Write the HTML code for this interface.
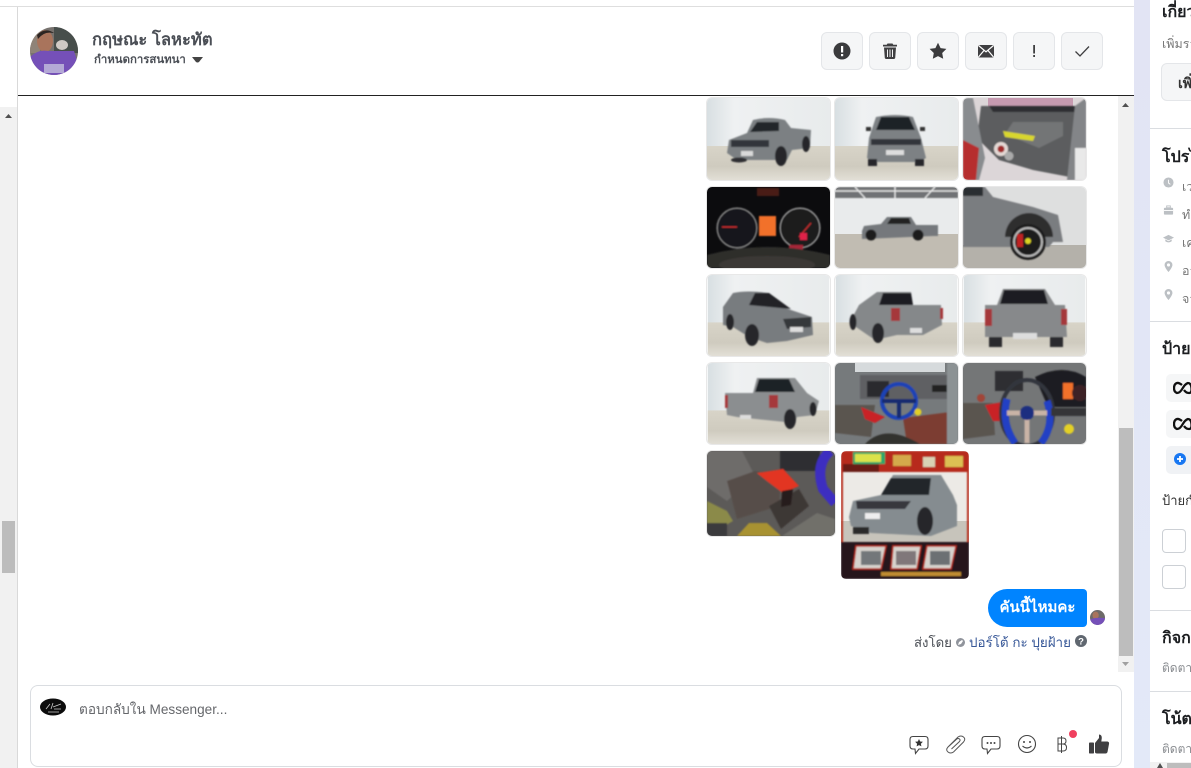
<!DOCTYPE html>
<html lang="th"><head><meta charset="utf-8"><title>Messenger</title>
<style>
html,body{margin:0;padding:0;width:1191px;height:768px;overflow:hidden;background:#fff;font-family:"Liberation Sans","Noto Sans CJK SC",sans-serif;color:#444950}
.a{position:absolute}
.btn{position:absolute;top:32px;width:40px;height:36px;background:#f5f6f7;border:1px solid #e4e6e9;border-radius:6px}
.btn svg{position:absolute;left:8px;top:6px;width:24px;height:24px}
.t{position:absolute;width:123px;height:82px;border-radius:5px;overflow:hidden;box-shadow:0 0 0 1px #e8e8e8}
.t svg{display:block;width:100%;height:100%}
.h{position:absolute;left:1162px;font-size:16px;font-weight:bold;color:#1c1e21;white-space:nowrap}
.s{position:absolute;left:1162px;font-size:12.500px;color:#8a8d91;white-space:nowrap}
.sep{position:absolute;left:1150px;width:41px;height:1px;background:#dadde1}
.r{position:absolute;left:1182px;font-size:12.500px;color:#777;white-space:nowrap}
.ic{position:absolute;left:1163px;width:11px;height:11px}
.tag{position:absolute;left:1166px;width:25px;height:28px;background:#f5f6f7;border-radius:5px 0 0 5px;overflow:hidden}
.tag svg{position:absolute;left:7px;top:7px}
.cb{position:absolute;left:1162px;width:22px;height:22px;border:1px solid #ccd0d5;border-radius:4px;background:#fff}
</style></head><body>
<svg width="0" height="0" style="position:absolute"><defs>
<filter id="b" x="-10%" y="-10%" width="120%" height="120%"><feGaussianBlur stdDeviation=".8"/></filter>
<linearGradient id="fl" x1="0" y1="0" x2="0" y2="1"><stop offset="0" stop-color="#d8d4c8"/><stop offset=".6" stop-color="#cfcbbf"/><stop offset="1" stop-color="#e2dfd6"/></linearGradient>
<linearGradient id="wl" x1="0" y1="0" x2="1" y2="0"><stop offset="0" stop-color="#d8dfe2"/><stop offset=".22" stop-color="#eff1f2"/><stop offset="1" stop-color="#e8ebec"/></linearGradient>
<symbol id="room" viewBox="0 0 123 82"><rect width="123" height="82" fill="url(#wl)"/><rect y="48" width="123" height="34" fill="url(#fl)"/></symbol>
<clipPath id="av"><circle cx="24" cy="24" r="24"/></clipPath>
</defs></svg>

<!-- frame -->
<div class="a" style="left:0;top:6px;width:1134px;height:1px;background:#dedede"></div>
<div class="a" style="left:17px;top:7px;width:1px;height:761px;background:#d9d9d9"></div>
<div class="a" style="left:0;top:107px;width:17px;height:661px;background:#f1f1f1"></div>
<svg class="a" style="left:4px;top:113px" width="9" height="6"><path d="M1 5L4.500 1 8 5z" fill="#505050"/></svg>
<div class="a" style="left:2px;top:521px;width:13px;height:52px;background:#bcbcbc"></div>
<div class="a" style="left:18px;top:95px;width:1116px;height:1px;background:#222"></div>

<!-- right column bg -->
<div class="a" style="left:1134px;top:0;width:16px;height:768px;background:linear-gradient(#e2e4f4,#e3e9f8)"></div>
<div class="a" style="left:1118px;top:96px;width:16px;height:576px;background:#f1f1f1"></div>
<svg class="a" style="left:1121px;top:102px" width="9" height="6"><path d="M1 5L4.500 1 8 5z" fill="#505050"/></svg>
<div class="a" style="left:1119px;top:428px;width:14px;height:228px;background:#bdbdbd"></div>
<svg class="a" style="left:1121px;top:661px" width="9" height="6"><path d="M1 1L4.500 5 8 1z" fill="#a0a0a0"/></svg>

<!-- header -->
<svg class="a" style="left:30px;top:27px" width="48" height="48" viewBox="0 0 48 48"><g clip-path="url(#av)"><rect width="48" height="48" fill="#77726e"/><rect x="24" width="24" height="26" fill="#474e4b"/><rect x="0" width="10" height="26" fill="#8f8378"/><ellipse cx="15" cy="14" rx="8" ry="11" fill="#a9745c"/><path d="M7 8Q15 0 24 6L23 6Q14 4 8 12z" fill="#2c2522"/><ellipse cx="32" cy="18" rx="6" ry="5" fill="#cfc9c4"/><path d="M0 48V30Q8 22 18 24L36 24 44 24Q48 34 48 48z" fill="#7550b8"/><rect x="14" y="37" width="20" height="9" fill="#b4a9d6"/></g></svg>
<div class="a" style="left:92px;top:27px;font-size:16.600px;font-weight:bold;color:#4b4f56;white-space:nowrap">กฤษณะ โลหะทัต</div>
<div class="a" style="left:94px;top:51px;font-size:11.400px;font-weight:bold;color:#4b4f56;white-space:nowrap">กำหนดการสนทนา</div>
<svg class="a" style="left:192px;top:57px" width="11" height="6"><path d="M0 0H11L7 5Q5.500 6 4 5z" fill="#444"/></svg>

<div class="btn" style="left:821px"><svg viewBox="0 0 24 24"><circle cx="12" cy="12" r="8.500" fill="#3b3b3d"/><rect x="11" y="7" width="2.200" height="6.500" fill="#fff"/><rect x="11" y="15" width="2.200" height="2.200" fill="#fff"/></svg></div>
<div class="btn" style="left:869px"><svg viewBox="0 0 24 24" fill="#3f3f41"><path d="M9.500 4.500h5l.8 1.300H19v1.700H5V5.800h3.700z"/><path fill-rule="evenodd" d="M6 8.500h12l-.8 10.500a1.500 1.500 0 0 1-1.500 1H8.300a1.500 1.500 0 0 1-1.500-1zM9 10.500v7.500h1v-7.500zM11.500 10.500v7.500h1v-7.500zM14 10.500v7.500h1v-7.500z"/></svg></div>
<div class="btn" style="left:917px"><svg viewBox="0 0 24 24"><path d="M12 3.800l2.600 5.300 5.800.8-4.200 4.100 1 5.800-5.200-2.700-5.200 2.700 1-5.800L3.600 9.900l5.800-.8z" fill="#3b3b3d"/></svg></div>
<div class="btn" style="left:965px"><svg viewBox="0 0 24 24"><rect x="4" y="6" width="16" height="12.500" rx="1.500" fill="#3f3f41"/><path d="M4.500 6.500L12 12.800l7.500-6.300M4.500 18L10 11.500M19.500 18L14 11.500" stroke="#fff" stroke-width="1.200" fill="none"/></svg></div>
<div class="btn" style="left:1013px"><svg viewBox="0 0 24 24"><rect x="11.200" y="6" width="1.800" height="8.500" fill="#3f3f41"/><rect x="11.200" y="16" width="1.800" height="2" fill="#3f3f41"/></svg></div>
<div class="btn" style="left:1061px"><svg viewBox="0 0 24 24"><path d="M5.500 12.500l4.500 4.500 9-9.500" stroke="#3f3f41" stroke-width="1.300" fill="none"/></svg></div>

<!-- image tiles -->
<div class="t" style="left:707px;top:98px"><svg viewBox="0 0 123 82"><use href="#room"/><g filter="url(#b)"><path d="M20 55L22 42 40 35 46 22Q62 18 78 22L84 30 104 32 103 50 85 52 80 62 62 62 30 62z" fill="#7c8083"/><path d="M43 34L50 24H72L72 33z" fill="#24272b"/><rect x="24" y="42" width="38" height="7" fill="#33363a"/><rect x="34" y="53" width="12" height="5" fill="#d9d9d9"/><ellipse cx="74" cy="58" rx="6" ry="10" fill="#26282a"/><ellipse cx="99" cy="46" rx="4" ry="8" fill="#26282a"/><ellipse cx="32" cy="62" rx="8" ry="2.500" fill="#2d2e30"/></g></svg></div>
<div class="t" style="left:835px;top:98px"><svg viewBox="0 0 123 82"><use href="#room"/><g filter="url(#b)"><path d="M34 40L41 19Q60 15 78 19L86 40 91 60 84 64H38L32 60z" fill="#7d8184"/><path d="M41 32L46 19H74L80 32z" fill="#1f2226"/><rect x="36" y="41" width="50" height="6" fill="#32353a"/><rect x="51" y="52" width="18" height="5" fill="#ddd"/><rect x="33" y="61" width="9" height="7" fill="#26282a"/><rect x="80" y="61" width="9" height="7" fill="#26282a"/><rect x="31" y="29" width="5" height="4" fill="#333"/><rect x="85" y="29" width="5" height="4" fill="#333"/></g></svg></div>
<div class="t" style="left:963px;top:98px"><svg viewBox="0 0 123 82"><rect width="123" height="82" fill="#dcd6d8"/><rect x="25" width="85" height="14" fill="#c69ab0"/><g filter="url(#b)"><path d="M18 8H120L112 80 70 72 36 62 14 40z" fill="#5c5d5f"/><path d="M26 8H116V14H30z" fill="#2d2e30"/><path d="M50 24H100V38L76 50 42 36z" fill="#737476"/><path d="M40 33L72 38 70 43 42 39z" fill="#d8d62e"/><path d="M0 0H10L22 60 16 82H0z" fill="#898c8f"/><path d="M0 42L16 50 13 82H0z" fill="#b62d2d"/><circle cx="38" cy="51" r="7" fill="#e3d8d4"/><circle cx="38" cy="51" r="3.500" fill="#a02c2c"/><circle cx="46" cy="58" r="4.500" fill="#aaa"/><path d="M112 8L123 0V82H104z" fill="#838588"/><rect x="112" y="50" width="11" height="32" fill="#e9e9e9"/></g></svg></div>

<div class="t" style="left:707px;top:187px;height:81px"><svg viewBox="0 0 123 81"><rect width="123" height="81" fill="#0c0c0e"/><g filter="url(#b)"><rect x="50" y="1" width="22" height="8" fill="#4a1a14"/><circle cx="30" cy="41" r="20" fill="#15171a" stroke="#999" stroke-width="1"/><circle cx="93" cy="41" r="20" fill="#1c1b1e" stroke="#aaa" stroke-width="1"/><rect x="52" y="29" width="17" height="20" fill="#f2712c"/><path d="M15 40H30" stroke="#d33" stroke-width="1"/><path d="M92 50L104 36" stroke="#d33" stroke-width="1"/><rect x="93" y="46" width="7" height="7" fill="#e02049"/><rect x="82" y="58" width="14" height="6" fill="#a62638"/><path d="M0 68Q60 52 123 68V81H0z" fill="#2e2e2c"/><ellipse cx="60" cy="78" rx="48" ry="9" fill="#3b3835"/></g></svg></div>
<div class="t" style="left:835px;top:187px;height:81px"><svg viewBox="0 0 123 81"><rect width="123" height="81" fill="#e9ebec"/><rect y="47" width="123" height="34" fill="#c1bcb2"/><g filter="url(#b)"><rect width="123" height="11" fill="#6f7275"/><path d="M0 4H123M20 0L30 11M60 0V11M100 0L90 11" stroke="#eee" stroke-width="1.200"/><path d="M27 44L29 39 46 37 52 30H76L81 38H103V49H98L27 52z" fill="#74787b"/><path d="M52 37L56 31H74L76 37z" fill="#222"/><circle cx="36" cy="48" r="5.500" fill="#1c1c1c"/><circle cx="83" cy="48" r="5.500" fill="#1c1c1c"/></g></svg></div>
<div class="t" style="left:963px;top:187px;height:81px"><svg viewBox="0 0 123 81"><rect width="123" height="81" fill="#dedfdf"/><rect y="58" width="123" height="23" fill="#b4b1aa"/><g filter="url(#b)"><path d="M0 0H22L30 10 70 20 95 28 100 55H90L86 60H0z" fill="#7a7d80"/><rect y="0" width="20" height="9" fill="#2c2e30"/><path d="M42 50A24 24 0 0 1 90 50z" fill="#2d2d2f"/><circle cx="65" cy="55" r="18" fill="#1a1a1a"/><circle cx="65" cy="55" r="14" fill="none" stroke="#bbb" stroke-width="2"/><rect x="54" y="47" width="6" height="13" fill="#bf2020"/><circle cx="65" cy="54" r="3" fill="#dbd323"/></g></svg></div>

<div class="t" style="left:707px;top:275px;height:81px"><svg viewBox="0 0 123 81"><use href="#room"/><g filter="url(#b)"><path d="M16 32L26 18Q40 15 62 18L78 33 105 42 106 60 80 66 60 68 42 62 26 52 16 50z" fill="#787c7f"/><path d="M42 30L48 18H62L84 34z" fill="#212428"/><path d="M76 44L104 42V52L80 54z" fill="#34373a"/><rect x="83" y="52" width="13" height="5" fill="#ddd"/><ellipse cx="45" cy="60" rx="7" ry="11" fill="#26282a"/><ellipse cx="23" cy="47" rx="4" ry="8" fill="#26282a"/></g></svg></div>
<div class="t" style="left:835px;top:275px;height:81px"><svg viewBox="0 0 123 81"><use href="#room"/><g filter="url(#b)"><path d="M16 45L24 30 42 17H76L78 30H106L107 50 88 60 62 60 40 65 18 50z" fill="#85888a"/><path d="M44 30L48 18H76L78 30z" fill="#1c1e22"/><rect x="56" y="33" width="9" height="13" fill="#a5383a"/><rect x="105" y="33" width="3" height="11" fill="#a5383a"/><rect x="75" y="53" width="12" height="5" fill="#ddd"/><ellipse cx="43" cy="58" rx="6" ry="10" fill="#26282a"/><ellipse cx="18" cy="47" rx="3.500" ry="8" fill="#26282a"/></g></svg></div>
<div class="t" style="left:963px;top:275px;height:81px"><svg viewBox="0 0 123 81"><use href="#room"/><g filter="url(#b)"><path d="M22 30H34L40 14H82L92 30H102L104 62H22z" fill="#87898b"/><path d="M37 29L41 15H81L85 29z" fill="#1c1e22"/><rect x="22" y="34" width="7" height="17" fill="#a5383a"/><rect x="98" y="34" width="6" height="16" fill="#a5383a"/><rect x="50" y="58" width="24" height="6" fill="#ddd"/><rect x="26" y="62" width="13" height="10" fill="#2a2b2d"/><rect x="87" y="62" width="13" height="10" fill="#2a2b2d"/></g></svg></div>

<div class="t" style="left:707px;top:363px;height:81px"><svg viewBox="0 0 123 81"><use href="#room"/><g filter="url(#b)"><path d="M18 30H46L50 15H88L100 30 112 38 108 52 90 54 88 60 30 54 20 52z" fill="#8b8e90"/><path d="M48 29L52 16H82L88 29z" fill="#1f2125"/><rect x="62" y="32" width="9" height="13" fill="#a5383a"/><rect x="18" y="32" width="3" height="13" fill="#a5383a"/><rect x="33" y="52" width="11" height="4" fill="#ddd"/><ellipse cx="83" cy="56" rx="6" ry="10" fill="#26282a"/><ellipse cx="106" cy="46" rx="3.500" ry="7" fill="#26282a"/></g></svg></div>
<div class="t" style="left:835px;top:363px;height:81px"><svg viewBox="0 0 123 81"><rect width="123" height="81" fill="#767a7c"/><rect x="20" width="90" height="9" fill="#d6dadc"/><g filter="url(#b)"><rect x="25" y="12" width="90" height="24" fill="#5f6163"/><rect x="32" y="18" width="22" height="16" fill="#2a2b2d"/><path d="M0 42L40 42 36 74 0 70z" fill="#5a5450"/><path d="M26 44L50 54 40 60 30 56z" fill="#c92226"/><path d="M68 55L123 48V81H72z" fill="#7c3c32"/><path d="M30 81Q50 60 85 81z" fill="#33302e"/><circle cx="64" cy="38" r="17" fill="none" stroke="#1f43b5" stroke-width="4"/><path d="M47 38H81M64 38V55" stroke="#182b70" stroke-width="4"/><circle cx="83" cy="49" r="3.500" fill="#e1cf26"/><rect x="97" y="22" width="15" height="7" fill="#222"/><rect x="112" y="0" width="11" height="81" fill="#8c9294"/></g></svg></div>
<div class="t" style="left:963px;top:363px;height:81px"><svg viewBox="0 0 123 81"><rect width="123" height="81" fill="#747677"/><g filter="url(#b)"><rect x="32" y="8" width="28" height="20" fill="#2e2f31"/><path d="M72 14Q100 0 123 14V44H85z" fill="#1d1d20"/><rect x="100" y="20" width="10" height="16" fill="#f2712c"/><circle cx="117" cy="30" r="8" fill="#3c2428"/><path d="M0 40H30L32 72 0 76z" fill="#5a5450"/><path d="M22 42L46 38 40 58 30 58z" fill="#c92226"/><circle cx="18" cy="35" r="4" fill="#a14538"/><ellipse cx="64" cy="50" rx="26" ry="33" fill="none" stroke="#33353c" stroke-width="4"/><path d="M44 36Q38 60 52 80M84 38Q92 62 78 80" stroke="#2340c4" stroke-width="7" fill="none"/><path d="M44 50H84M64 50V80" stroke="#c9b3a6" stroke-width="5"/><circle cx="64" cy="50" r="7" fill="#1b2d80"/><circle cx="106" cy="66" r="5" fill="#e3d028"/><rect x="88" y="45" width="35" height="8" fill="#353638"/></g></svg></div>

<div class="t" style="left:707px;top:451px;width:128px;height:85px"><svg viewBox="0 0 128 85"><rect width="128" height="85" fill="#5c5a58"/><g filter="url(#b)"><rect x="73" width="40" height="20" fill="#2f2f31"/><path d="M0 0H35L48 25 20 50 0 36z" fill="#6e6c6a"/><path d="M20 30L48 20 74 24 72 55 30 68z" fill="#574e48"/><path d="M50 22L76 18 92 35 76 42 60 30z" fill="#e23623"/><path d="M62 55L92 38 102 55 74 78z" fill="#3e3836"/><path d="M75 40L86 38 84 54 74 56z" fill="#251c1b"/><path d="M0 50L20 60 26 70 0 85z" fill="#8b8a4a"/><path d="M75 85L110 62 128 68V85z" fill="#716f6b"/><path d="M30 85L42 72 60 72 74 85z" fill="#a89230"/><rect x="0" y="72" width="20" height="13" fill="#3a3b3d"/><path d="M123 0Q108 14 116 38L128 52" fill="none" stroke="#3c2ec0" stroke-width="10"/></g></svg></div>
<div class="t" style="left:841px;top:451px;width:128px;height:128px;box-shadow:none"><svg viewBox="0 0 128 128"><rect width="128" height="128" fill="#eceae6"/><rect y="70" width="128" height="22" fill="#c7c4bb"/><g filter="url(#b)"><rect width="128" height="21" fill="#b72a1f"/><rect x="12" y="1" width="32" height="12" fill="#2aa86a"/><rect x="14" y="3" width="26" height="8" fill="#dbe24a"/><rect x="52" y="4" width="18" height="11" fill="#d4a94c"/><rect x="82" y="6" width="12" height="10" fill="#d8d2b4"/><rect x="104" y="5" width="18" height="11" fill="#dcc052"/><rect x="2" y="13" width="36" height="8" fill="#6a1d18"/><rect y="21" width="2" height="107" fill="#b72a1f"/><rect x="126" y="21" width="2" height="107" fill="#b72a1f"/><path d="M8 66L12 50 40 44 52 24H100L112 44 116 54V75L90 85 30 82 10 75z" fill="#858c90"/><path d="M40 44L50 27H90L88 44z" fill="#24282c"/><path d="M15 50H70L64 58H16z" fill="#37393c"/><rect x="24" y="62" width="15" height="6" fill="#eee"/><ellipse cx="84" cy="70" rx="8" ry="14" fill="#26282a"/><rect x="12" y="76" width="16" height="7" fill="#2a2a2c"/><rect y="91" width="128" height="37" fill="#27191a"/><path d="M15 95H45L40 118H12zM52 95H80L76 118H50zM86 95H115L110 118H82z" fill="#d7d3cd" stroke="#b72a1f" stroke-width="1.500"/><rect x="20" y="100" width="20" height="14" fill="#73777a"/><rect x="55" y="100" width="20" height="14" fill="#80777a"/><rect x="89" y="100" width="20" height="14" fill="#6c7073"/><rect x="40" y="121" width="80" height="4" fill="#bf8c33"/></g></svg></div>

<!-- bubble -->
<div class="a" style="left:988px;top:589px;width:99px;height:38px;background:#0084ff;border-radius:19px 4px 4px 19px;color:#fff;font-size:15px;font-weight:bold;line-height:37px;text-align:center;white-space:nowrap">คันนี้ไหมคะ</div>
<svg class="a" style="left:1090px;top:610px" width="15" height="15" viewBox="0 0 48 48"><g clip-path="url(#av)"><rect width="48" height="48" fill="#6d6a68"/><ellipse cx="18" cy="17" rx="10" ry="12" fill="#a9745c"/><path d="M0 48V30Q20 22 48 26V48z" fill="#7550b8"/></g></svg>
<div class="a" style="left:914px;top:632px;font-size:13.200px;color:#4b4f56;white-space:nowrap">ส่งโดย</div>
<svg class="a" style="left:955px;top:637px" width="11" height="11"><circle cx="5.500" cy="5.500" r="4.500" fill="#90949c"/><path d="M3 8l1-3 3-2 1 1-2 3z" fill="#fff"/></svg>
<div class="a" style="left:969px;top:632px;font-size:13.400px;color:#385898;white-space:nowrap">ปอร์โต้ กะ ปุยฝ้าย</div>
<svg class="a" style="left:1075px;top:635px" width="12" height="12"><circle cx="6" cy="6" r="6" fill="#606770"/><text x="6" y="9.500" font-size="9.500" font-weight="bold" text-anchor="middle" fill="#fff" font-family="Liberation Sans">?</text></svg>

<!-- composer -->
<div class="a" style="left:30px;top:685px;width:1090px;height:80px;border:1px solid #dadde1;border-radius:8px;background:#fff"></div>
<svg class="a" style="left:40px;top:698px" width="26" height="18" viewBox="0 0 26 18"><ellipse cx="13" cy="9" rx="13" ry="8.500" fill="#0c0c0c"/><path d="M6 11L10 6M11 11L13 5M13 9L21 6M14 11H21M8 14H19" stroke="#ccc" stroke-width=".8"/></svg>
<div class="a" style="left:79px;top:698px;font-size:13.600px;color:#65676b;white-space:nowrap">ตอบกลับใน Messenger...</div>

<svg class="a" style="left:908px;top:733px" width="22" height="22" viewBox="0 0 22 22"><path d="M5 3.500H17Q20 3.500 20 6.500V13Q20 16 17 16H11L7.500 20.500 7 16H5Q2 16 2 13V6.500Q2 3.500 5 3.500z" fill="none" stroke="#444" stroke-width="1.100"/><path d="M11 6l1.200 2.500 2.700.3-2 1.900.5 2.700-2.400-1.300-2.400 1.300.5-2.700-2-1.900 2.700-.3z" fill="#333"/></svg>
<svg class="a" style="left:944px;top:733px" width="22" height="22" viewBox="0 0 22 22"><path d="M4 14L14 4Q17 2 19.500 4T19.500 9L9.500 19Q6.500 21 4 19T3.800 14.200L12.800 6Q14.300 5 15.500 6T15.500 8.500L7.500 16" fill="none" stroke="#555" stroke-width="1"/></svg>
<svg class="a" style="left:980px;top:733px" width="22" height="22" viewBox="0 0 22 22"><path d="M5 3.500H17Q20 3.500 20 6.500V13Q20 16 17 16H11L7.500 20.500 7 16H5Q2 16 2 13V6.500Q2 3.500 5 3.500z" fill="none" stroke="#444" stroke-width="1.100"/><circle cx="7.500" cy="10" r="1" fill="#444"/><circle cx="11" cy="10" r="1" fill="#444"/><circle cx="14.500" cy="10" r="1" fill="#444"/></svg>
<svg class="a" style="left:1016px;top:733px" width="22" height="22" viewBox="0 0 22 22"><circle cx="11" cy="11" r="8.500" fill="none" stroke="#444" stroke-width="1.100"/><circle cx="8" cy="9" r="1" fill="#444"/><circle cx="14" cy="9" r="1" fill="#444"/><path d="M6.500 13Q11 17 15.500 13" fill="none" stroke="#444" stroke-width="1.100"/></svg>
<svg class="a" style="left:1051px;top:733px" width="22" height="22" viewBox="0 0 22 22"><path d="M7 5H12Q15 5 15 8T12 11H7ZM12 11Q15.500 11 15.500 14.500T12 18H7V5M10.500 3V20" fill="none" stroke="#444" stroke-width="1"/></svg>
<div class="a" style="left:1069px;top:730px;width:8px;height:8px;border-radius:50%;background:#f0405f"></div>
<svg class="a" style="left:1088px;top:733px" width="22" height="22" viewBox="0 0 22 22"><rect x="1" y="9.500" width="5" height="11" rx=".8" fill="#3f3f41"/><path d="M7 10L11 5V1.500Q13.800 1.500 13.800 5L13.300 8.500H19.500Q21.500 9 21 11L19.500 19Q19 20.500 17.500 20.500H9Q7 20.500 7 19z" fill="#3f3f41"/></svg>

<!-- right panel -->
<div class="h" style="top:0">เกี่ยวกับ</div>
<div class="s" style="top:34px;color:#777">เพิ่มรายละเอียด</div>
<div class="a" style="left:1161px;top:63px;width:40px;height:36px;background:#f5f6f7;border:1px solid #e4e6e9;border-radius:6px"></div>
<div class="a" style="left:1178px;top:73px;font-size:14px;font-weight:bold;color:#333;white-space:nowrap">เพิ่ม</div>
<div class="sep" style="top:128px"></div>
<div class="h" style="top:145px">โปรไฟล์</div>
<svg class="ic" style="top:177px" viewBox="0 0 12 12"><circle cx="6" cy="6" r="5.500" fill="#bcc0c4"/><path d="M6 3V6.500L8 8" stroke="#fff" fill="none"/></svg>
<svg class="ic" style="top:205px" viewBox="0 0 12 12"><rect x="1" y="3" width="10" height="7.500" rx="1" fill="#bcc0c4"/><rect x="4" y="1" width="4" height="2" fill="none" stroke="#bcc0c4"/><path d="M1 6H11" stroke="#fff"/></svg>
<svg class="ic" style="top:233px" viewBox="0 0 12 12"><path d="M6 2L12 5 6 8 0 5z" fill="#bcc0c4"/><path d="M2.500 7V9Q6 11.500 9.500 9V7L6 9z" fill="#bcc0c4"/></svg>
<svg class="ic" style="top:261px" viewBox="0 0 12 12"><path fill-rule="evenodd" d="M6 0A4.300 4.300 0 0 1 10.300 4.300C10.300 7 6 12 6 12S1.700 7 1.700 4.300A4.300 4.300 0 0 1 6 0zM6 2.600A1.700 1.700 0 1 0 6 6 1.700 1.700 0 0 0 6 2.600z" fill="#bcc0c4"/></svg>
<svg class="ic" style="top:289px" viewBox="0 0 12 12"><path fill-rule="evenodd" d="M6 0A4.300 4.300 0 0 1 10.300 4.300C10.300 7 6 12 6 12S1.700 7 1.700 4.300A4.300 4.300 0 0 1 6 0zM6 2.600A1.700 1.700 0 1 0 6 6 1.700 1.700 0 0 0 6 2.600z" fill="#bcc0c4"/></svg>
<div class="r" style="top:177px">เวลาท้องถิ่น</div>
<div class="r" style="top:205px">ทำงาน</div>
<div class="r" style="top:233px">เคยเรียน</div>
<div class="r" style="top:261px">อาศัยอยู่</div>
<div class="r" style="top:289px">จาก</div>
<div class="sep" style="top:321px"></div>
<div class="h" style="top:337px">ป้ายกำกับ</div>
<div class="tag" style="top:374px"><svg width="24" height="14" viewBox="0 0 24 14"><path d="M9 4Q6 1.500 4 2 1 3 1 7T4 12Q7 12 9.500 7.500T15 2Q18 2 18.500 7T16 12Q13 12 11 9" fill="none" stroke="#111" stroke-width="2.300"/></svg></div>
<div class="tag" style="top:410px"><svg width="24" height="14" viewBox="0 0 24 14"><path d="M9 4Q6 1.500 4 2 1 3 1 7T4 12Q7 12 9.500 7.500T15 2Q18 2 18.500 7T16 12Q13 12 11 9" fill="none" stroke="#111" stroke-width="2.300"/></svg></div>
<div class="a" style="left:1166px;top:446px;width:25px;height:28px;background:#f0f2f5;border-radius:5px 0 0 5px"></div>
<svg class="a" style="left:1174px;top:453px" width="12" height="12"><circle cx="6" cy="6" r="6" fill="#1877f2"/><path d="M6 3V9M3 6H9" stroke="#fff" stroke-width="1.800"/></svg>
<div class="s" style="top:490px;font-size:13px;color:#333">ป้ายกำกับ</div>
<div class="cb" style="top:529px"></div>
<div class="cb" style="top:565px"></div>
<div class="sep" style="top:610px"></div>
<div class="h" style="top:626px">กิจกรรม</div>
<div class="s" style="top:659px;font-size:12px">ติดตาม</div>
<div class="sep" style="top:691px"></div>
<div class="h" style="top:707px">โน้ต</div>
<div class="s" style="top:740px;font-size:12px">ติดตาม</div>
<div class="a" style="left:1150px;top:762px;width:41px;height:6px;background:#f1f1f1"></div>
<div class="a" style="left:1167px;top:763px;width:24px;height:5px;background:#bdbdbd"></div>
<svg class="a" style="left:1157px;top:763px" width="6" height="5"><path d="M3 0L6 5H0z" fill="#505050"/></svg>
</body></html>
